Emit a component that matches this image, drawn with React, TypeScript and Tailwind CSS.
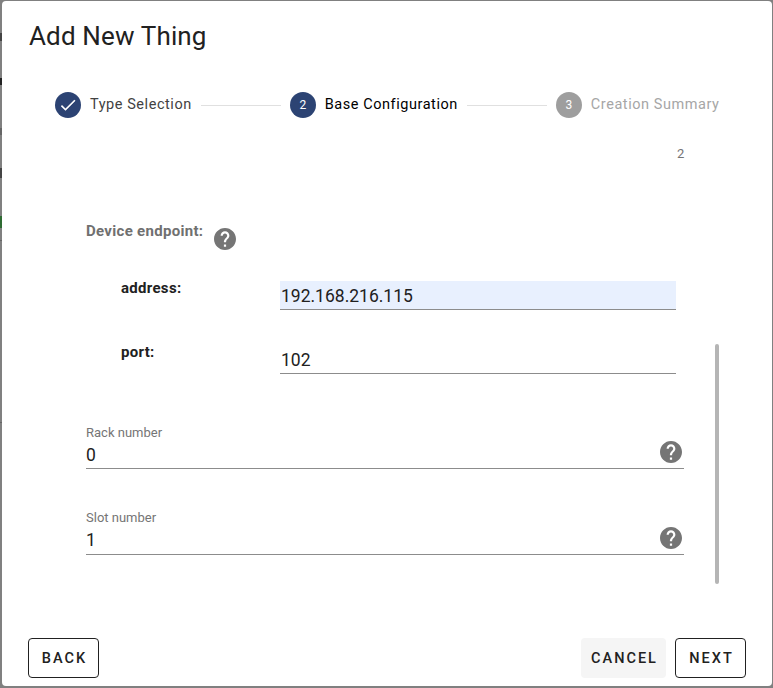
const HELP_PATH = "M12 2C6.48 2 2 6.48 2 12s4.48 10 10 10 10-4.48 10-10S17.52 2 12 2zm1 17h-2v-2h2v2zm2.07-7.75l-.9.92C13.45 12.9 13 13.5 13 15h-2v-.5c0-1.1.45-2.1 1.17-2.83l1.24-1.26c.37-.36.59-.86.59-1.41 0-1.1-.9-2-2-2s-2 .9-2 2H8c0-2.21 1.79-4 4-4s4 1.79 4 4c0 .88-.36 1.68-.93 2.25z";

function HelpIcon() {
  return (
    <svg viewBox="2 2 20 20" className="w-[22px] h-[22px] shrink-0" fill="#757575">
      <path d={HELP_PATH} />
    </svg>
  );
}

function Step({ n, label, state }: { n: number; label: string; state: "done" | "active" | "todo" }) {
  return (
    <div className="flex items-center gap-[9px] shrink-0">
      <div className={`w-[26px] h-[26px] rounded-full flex items-center justify-center text-white text-xs ${state === "todo" ? "bg-[#9e9e9e]" : "bg-[#2c4373]"}`}>
        {state === "done" ? (
          <svg viewBox="0 0 24 24" className="w-[20px] h-[20px]" fill="#fff">
            <path d="M9 16.2 4.8 12l-1.4 1.4L9 19 21 7l-1.4-1.4z" />
          </svg>
        ) : (
          n
        )}
      </div>
      <span className={`text-[14.5px] tracking-[0.55px] ${state === "done" ? "text-[#424242]" : state === "active" ? "text-black" : "text-[#a6a6a6]"}`}>{label}</span>
    </div>
  );
}

function NestedField({ label, value, highlight }: { label: string; value: string; highlight?: boolean }) {
  return (
    <div className="flex h-[29px] pl-[35px] pr-2">
      <span className="w-[159px] -mt-[1px] text-[15px] tracking-[0.3px] font-bold text-[#212121] leading-4">{label}</span>
      <div className={`w-[396px] h-[29px] border-b border-[#8c8c8c] pl-[1px] pt-[2px] text-[17.5px] leading-[27px] text-[#212121] ${highlight ? "bg-[#e8f0fe]" : ""}`}>{value}</div>
    </div>
  );
}

function LabelField({ label, value, tall }: { label: string; value: string; tall?: boolean }) {
  return (
    <div className={`w-[598px] border-b border-[#8c8c8c] relative ${tall ? "h-[44px]" : "h-[43px]"}`}>
      <div className="text-[13px] leading-[14px] text-[#757575]">{label}</div>
      <div className="text-[17.5px] leading-[26px] pt-[2px] text-[#212121]">{value}</div>
      <div className={`absolute right-[2px] ${tall ? "top-[16px]" : "top-[15px]"}`}><HelpIcon /></div>
    </div>
  );
}

export default function App() {
  return (
    <div className="relative w-[773px] h-[688px] bg-[#808080] pl-[2px] pt-[1px] pr-[1px] pb-[2px] font-['Roboto',sans-serif]">
      {/* page behind the dialog, only a sliver shows on the left */}
      <div className="absolute left-0 top-[33px] w-[2px] h-[8px] bg-[#444444]" />
      <div className="absolute left-0 top-[78px] w-[2px] h-[7px] bg-[#222222]" />
      <div className="absolute left-0 top-[128px] w-[2px] h-[7px] bg-[#666666]" />
      <div className="absolute left-0 top-[168px] w-[2px] h-[10px] bg-[#444444]" />
      <div className="absolute left-0 top-[216px] w-[2px] h-[12px] bg-[#2e6b32]" />
      <div className="absolute left-0 top-[240px] w-[2px] h-px bg-[#666666]" />
      <div className="absolute left-0 top-[422px] w-[2px] h-px bg-[#666666]" />

      <div className="relative w-full h-full bg-white rounded-[4px] flex flex-col overflow-hidden">
        <h1 className="pl-[27px] pt-[18px] h-[64px] text-[26px] tracking-[0.15px] leading-[34px] font-normal text-[#212121]">Add New Thing</h1>

        <div className="flex items-center pl-[53px] pt-[26px] h-[54px]">
          <Step n={1} label="Type Selection" state="done" />
          <div className="w-[80px] h-px bg-[#e0e0e0] mx-[9px]" />
          <Step n={2} label="Base Configuration" state="active" />
          <div className="w-[80px] h-px bg-[#e0e0e0] mx-[9px]" />
          <Step n={3} label="Creation Summary" state="todo" />
        </div>

        <div className="flex-1 flex flex-col pl-[84px]">
          <div className="h-[15px] mt-[27px] pl-[591px] text-[13px] leading-[15px] text-[#757575]">2</div>
          <div className="flex items-start h-[34px] mt-[61px]">
            <span className="text-[15px] tracking-[0.3px] font-bold leading-4 text-[#707070] mt-[1px]">Device endpoint:</span>
            <div className="ml-[11px] mt-[6px]"><HelpIcon /></div>
          </div>
          <div className="mt-[25px] flex flex-col gap-[35px]">
            <NestedField label="address:" value="192.168.216.115" highlight />
            <NestedField label="port:" value="102" />
          </div>
          <div className="mt-[52px] flex flex-col gap-[42px]">
            <LabelField label="Rack number" value="0" />
            <LabelField label="Slot number" value="1" tall />
          </div>
        </div>

        <div className="flex items-center justify-between pl-[26px] pr-[26px] pb-[8px]">
          <button className="h-[40px] w-[71px] pl-[2px] pt-[1px] border border-[#212121] rounded-[4px] text-[14.5px] font-medium tracking-[2px] text-[#212121]">BACK</button>
          <div className="flex gap-[9px]">
            <button className="h-[40px] w-[85px] pl-[2px] pt-[1px] bg-[#f5f5f5] rounded-[4px] text-[14.5px] font-medium tracking-[2px] text-[#212121]">CANCEL</button>
            <button className="h-[40px] w-[71px] pl-[2px] pt-[1px] border border-[#212121] rounded-[4px] text-[14.5px] font-medium tracking-[2px] text-[#212121]">NEXT</button>
          </div>
        </div>

        <div className="absolute left-[713px] top-[343px] w-[4px] h-[240px] rounded-full bg-[#b5b5b5]" />
      </div>
    </div>
  );
}
